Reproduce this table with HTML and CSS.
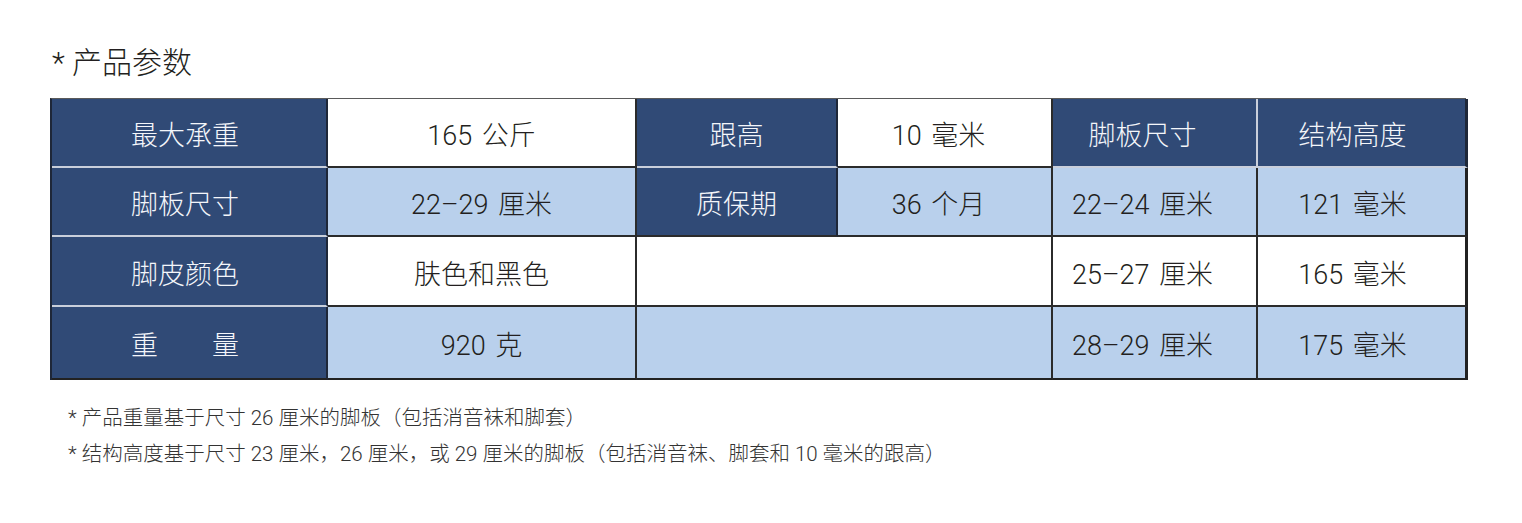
FILE: index.html
```html
<!DOCTYPE html>
<html lang="zh-CN">
<head>
<meta charset="utf-8">
<title>产品参数</title>
<link rel="stylesheet" href="styles.css">
</head>
<body>
<div class="page">
  <h2 class="title">* 产品参数</h2>
  <div class="spec">
    <div class="c h c1">最大承重</div>
    <div class="c w">165 公斤</div>
    <div class="c h">跟高</div>
    <div class="c w c4">10 毫米</div>
    <div class="c h c5">脚板尺寸</div>
    <div class="c h c6 last">结构高度</div>

    <div class="c h c1">脚板尺寸</div>
    <div class="c b">22–29 厘米</div>
    <div class="c h dark-bottom">质保期</div>
    <div class="c b c4">36 个月</div>
    <div class="c b c5">22–24 厘米</div>
    <div class="c b c6 last">121 毫米</div>

    <div class="c h c1">脚皮颜色</div>
    <div class="c w">肤色和黑色</div>
    <div class="c w span2"></div>
    <div class="c w c5">25–27 厘米</div>
    <div class="c w c6 last">165 毫米</div>

    <div class="c h c1 bottom">重　　量</div>
    <div class="c b bottom">920 克</div>
    <div class="c b span2 bottom"></div>
    <div class="c b c5 bottom">28–29 厘米</div>
    <div class="c b c6 last bottom">175 毫米</div>
  </div>
  <div class="notes">
    <p>* 产品重量基于尺寸 26 厘米的脚板（包括消音袜和脚套）</p>
    <p>* 结构高度基于尺寸 23 厘米，26 厘米，或 29 厘米的脚板（包括消音袜、脚套和 10 毫米的跟高）</p>
  </div>
</div>
</body>
</html>
```

FILE: styles.css
```css
* { box-sizing: border-box; }
html, body { margin: 0; padding: 0; background: #ffffff; }
body {
  font-family: Roboto, "Noto Sans CJK SC", sans-serif;
  font-weight: 300;
  color: #231f20;
}
.page {
  padding: 40px 0 0 50px;
}
.title {
  margin: 0 0 0 2px;
  font-size: 30px;
  font-weight: 300;
  line-height: 46px;
  height: 58px;
  color: #231f20;
}
.spec {
  display: grid;
  width: 1416px;
  grid-template-columns: 276px 309px 201px 215px 205px 210px;
  grid-template-rows: 69px 69px 70px 73px;
  border-top: 1px solid #5a5a5a;
  border-left: 2px solid #1e2738;
}
.c {
  display: flex;
  align-items: center;
  justify-content: center;
  font-size: 27px;
  font-weight: 300;
  word-spacing: 3px;
  border-right: 2px solid #2b2b2b;
  border-bottom: 2px solid #2b2b2b;
  padding-top: 2px;
}
.h {
  background: #304a76;
  color: #f4f6fa;
  border-bottom-color: #c9cfdb;
  border-right-color: #1e2738;
}
.h.dark-bottom { border-bottom-color: #2b2b2b; }
.w { background: #ffffff; }
.b { background: #b9d0ec; }
.c1 { padding-right: 8px; }
.c4 { padding-right: 12px; }
.c5 { padding-right: 24px; }
.c6 { padding-right: 18px; }
.h.c5 { border-right-color: #c9cfdb; }
.last { border-right-color: #222; border-right-width: 3px; }
.h.last { border-right-color: #1e2738; }
.span2 { grid-column: span 2; }
.bottom { border-bottom-color: #222; border-bottom-width: 2px; }
.notes {
  margin-top: 20px;
  padding-left: 18px;
}
.notes p {
  margin: 0;
  font-size: 20.5px;
  line-height: 36px;
  color: #333333;
}
```
